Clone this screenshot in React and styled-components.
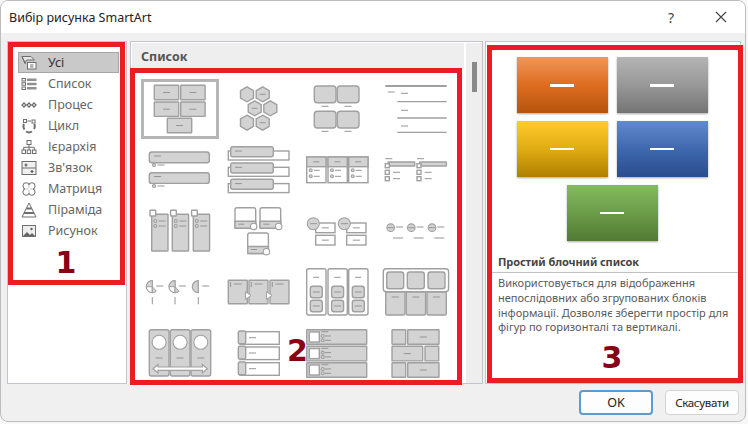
import styled, { createGlobalStyle } from "styled-components";

const GlobalStyle = createGlobalStyle`
  html, body { margin: 0; padding: 0; background: #f7f7f7; }
  body { font-family: "Noto Sans", "Open Sans", sans-serif; width: 748px; height: 424px; overflow: hidden; }
`;

const Dialog = styled.div`
  box-sizing: border-box;
  width: 746px;
  height: 422px;
  display: flex;
  flex-direction: column;
  background: #f0f0f0;
  border: 1px solid #bdbdbd;
  border-radius: 8px;
  overflow: hidden;
`;

const TitleBar = styled.div`
  height: 32px;
  flex: none;
  display: flex;
  align-items: center;
  gap: 2px;
  background: #fff;
  padding-left: 8px;
  font-size: 12.5px;
  color: #222;
`;

const TitleText = styled.span`
  flex: 1;
`;

const TitleButton = styled.span`
  width: 48px;
  display: flex;
  justify-content: center;
  color: #444;
  font-size: 14px;
`;

const Body = styled.div`
  display: flex;
  padding: 8px 0 0 6px;
  height: 343px;
  flex: none;
`;

const Panel = styled.div`
  box-sizing: border-box;
  height: 343px;
  background: #fff;
  border: 1px solid #c4c4cc;
  flex: none;
`;

const LeftPanel = styled(Panel)`
  width: 120px;
  margin-right: 3px;
`;

const MiddlePanel = styled(Panel)`
  width: 353px;
  margin-right: 2px;
  display: flex;
`;

const RightPanel = styled(Panel)`
  width: 256px;
`;

const RedBox = styled.div`
  box-sizing: border-box;
  border: 5px solid #ed1c24;
  background: #fff;
  position: relative;
`;

const LeftRed = styled(RedBox)`
  width: 117px;
  height: 243px;
  padding: 5px 1px 0 5px;
`;

const CategoryList = styled.div`
  display: flex;
  flex-direction: column;
`;

const Category = styled.div`
  box-sizing: border-box;
  height: 21px;
  display: flex;
  align-items: center;
  gap: 11px;
  padding-left: 3px;
  font-size: 12.5px;
  color: ${(p) => (p.$active ? "#333" : "#666")};
  background: ${(p) => (p.$active ? "#c9c9c9" : "transparent")};
  outline: ${(p) => (p.$active ? "1px solid #a6a6a6" : "none")};
  outline-offset: -1px;
`;

const Numeral = styled.div`
  font-family: "DejaVu Sans", sans-serif;
  font-weight: 700;
  font-size: 30px;
  line-height: 32px;
  color: #880015;
  text-align: center;
`;

const ListNumeral = styled(Numeral)`
  margin-top: 6px;
  padding-right: 5px;
`;

const GalleryNumeral = styled(Numeral)`
  position: absolute;
  left: 152px;
  top: 262px;
`;

const DescNumeral = styled(Numeral)`
  margin-top: 7px;
  padding-right: 6px;
`;

const GalleryColumn = styled.div`
  width: 334px;
  margin-left: -1px;
  flex: none;
  padding-top: 1px;
`;

const GalleryHeader = styled.div`
  box-sizing: border-box;
  height: 25px;
  margin-left: 2px;
  display: flex;
  align-items: center;
  padding: 2px 0 0 9px;
  background: #eeeeee;
  font-size: 12.5px;
  font-weight: 700;
  color: #555;
`;

const GalleryRed = styled(RedBox)`
  width: 332px;
  height: 317px;
  overflow: hidden;
  padding: 6px 0 0 6px;
`;

const Gallery = styled.div`
  display: grid;
  grid-template-columns: repeat(4, 78px);
  grid-auto-rows: 60px;
  gap: 1px;
`;

const Thumb = styled.div`
  box-sizing: border-box;
  width: 78px;
  height: 60px;
  outline: ${(p) => (p.$selected ? "3px solid #b5b5b5" : "none")};
  outline-offset: -3px;
  svg { display: block; }
`;

const ScrollTrack = styled.div`
  width: 16px;
  margin-left: 2px;
  margin-top: 1px;
  background: #eeeeee;
  padding-top: 19px;
  display: flex;
  justify-content: center;
`;

const ScrollThumb = styled.div`
  width: 5px;
  height: 30px;
  background: #8a8a8a;
`;

const RightRed = styled(RedBox)`
  width: 256px;
  height: 338px;
  margin: 3px -2px 0 1px;
`;

const Swatches = styled.div`
  display: flex;
  flex-wrap: wrap;
  justify-content: center;
  gap: 8px 9px;
  width: 192px;
  margin: 7px 0 0 24px;
`;

const Swatch = styled.div`
  width: 91px;
  height: 56px;
  display: flex;
  align-items: center;
  justify-content: center;
  background: linear-gradient(${(p) => p.$top}, ${(p) => p.$mid} 50%, ${(p) => p.$bottom});
  box-shadow: 0 1px 2px rgba(0, 0, 0, 0.35);
  &::after {
    content: "";
    width: 24px;
    height: ${(p) => (p.$thick ? "3px" : "2px")};
    background: #fff;
  }
`;

const DescTitle = styled.div`
  margin-top: 9px;
  height: 22px;
  display: flex;
  align-items: center;
  padding-left: 6px;
  font-size: 11px;
  letter-spacing: -0.1px;
  font-weight: 700;
  color: #444;
  border-bottom: 1px solid #c0c0c0;
`;

const DescText = styled.div`
  padding: 3px 0 0 6px;
  font-size: 11px;
  line-height: 14.8px;
  color: #5a5a5a;
  white-space: nowrap;
`;

const Footer = styled.div`
  display: flex;
  justify-content: flex-end;
  gap: 12px;
  padding: 6px 6px 0 0;
`;

const Button = styled.button`
  box-sizing: border-box;
  width: 74px;
  height: 25px;
  padding: 0;
  font-family: inherit;
  font-size: ${(p) => (p.$primary ? "12.5px" : "11.5px")};
  letter-spacing: ${(p) => (p.$primary ? "0" : "-0.3px")};
  color: #222;
  background: #fdfdfd;
  border: ${(p) => (p.$primary ? "2px solid #5c9bd1" : "1px solid #d2d2d2")};
  border-radius: 4px;
`;

/* category icons */
const Ico = ({ children }) => (
  <svg width="16" height="16" viewBox="0 0 16 16" fill="none" stroke="#6e6e6e" strokeWidth="1">
    {children}
  </svg>
);

const icons = [
  <Ico>
    <path d="M1 1.5h9l3.5 3.5h-8l-1.5 3.5z" fill="#e6e6e6" />
    <path d="M1 1.5l3.5 7" />
    <rect x="6.5" y="7.5" width="8.5" height="6.5" fill="#fff" />
    <path d="M9 10h3.5M9 12h3.5" />
  </Ico>,
  <Ico>
    <rect x="1" y="2.5" width="3.5" height="2.5" />
    <rect x="1" y="6.7" width="3.5" height="2.5" />
    <rect x="1" y="11" width="3.5" height="2.5" />
    <path d="M6 3.8h9.5M6 8h9.5M6 12.2h9.5" strokeWidth="2.6" stroke="#8f8f8f" />
  </Ico>,
  <Ico>
    <path d="M3 6l2 2-2 2-2-2zM8 6l2 2-2 2-2-2zM13 6l2 2-2 2-2-2z" strokeWidth="1.3" />
  </Ico>,
  <Ico>
    <path d="M3 6a5.5 5.5 0 0 0 .5 5.5M5 13.5a5.5 5.5 0 0 0 6 0M13 11a5.5 5.5 0 0 0 .3-5" strokeWidth="2" />
    <rect x="2.5" y="1.5" width="3" height="3" fill="#fff" />
    <rect x="11" y="2" width="3" height="3" fill="#fff" />
    <path d="M6.5 3h3.5" />
  </Ico>,
  <Ico>
    <rect x="6" y="1.5" width="4" height="4" />
    <rect x="1" y="11" width="3.5" height="3.5" />
    <rect x="6.2" y="11" width="3.5" height="3.5" />
    <rect x="11.5" y="11" width="3.5" height="3.5" />
    <path d="M8 5.5V11M2.7 11V8.3h10.6V11" />
  </Ico>,
  <Ico>
    <rect x="1" y="1.5" width="14" height="13" fill="#f0f0f0" />
    <path d="M1 8h14" />
    <path d="M3.5 5h3M5 3.5v3M9.5 11.5h3" strokeWidth="1.2" stroke="#555" />
    <path d="M11 10v3" stroke="#555" strokeWidth="1.2" />
  </Ico>,
  <Ico>
    <circle cx="5.2" cy="5" r="3.3" />
    <circle cx="10.8" cy="5" r="3.3" />
    <circle cx="5.2" cy="11" r="3.3" />
    <circle cx="10.8" cy="11" r="3.3" />
    <path d="M8 4v8M4 8h8" stroke="#fff" strokeWidth="1.5" />
  </Ico>,
  <Ico>
    <path d="M8 1l7 14H1z" />
    <path d="M5.3 6.5h5.4M3 11h10" strokeWidth="2" />
  </Ico>,
  <Ico>
    <rect x="1.5" y="2.5" width="13" height="11" fill="#eee" />
    <path d="M2 13l4-4 3 3 2-2 3 3z" fill="#666" stroke="none" />
    <circle cx="10.5" cy="6" r="1.2" fill="#666" stroke="none" />
  </Ico>,
];

const categories = ["Усі", "Список", "Процес", "Цикл", "Ієрархія", "Зв'язок", "Матриця", "Піраміда", "Рисунок"];

/* gallery drawing helpers */
const G = "#d3d3d3";
const S = "#a0a0a0";
const L = "#959595";

const D = ({ x, y, w = 7 }) => <path d={`M${x} ${y}h${w}`} stroke={L} strokeWidth="1" fill="none" />;
const R = ({ x, y, w, h, r = 1, f = G, sw = 1.4 }) => (
  <rect x={x} y={y} width={w} height={h} rx={r} fill={f} stroke={S} strokeWidth={sw} />
);
const B = (props) => (
  <>
    <R {...props} />
    <D x={props.x + props.w / 2 - 3.5} y={props.y + props.h / 2} />
  </>
);
const C = ({ x, y, r = 1.5, f = G }) => <circle cx={x} cy={y} r={r} fill={f} stroke={S} strokeWidth="1.1" />;
const Hex = ({ x, y, dash }) => (
  <>
    <path
      d={`M${x} ${y - 7.5}l6.5 3.75v7.5l-6.5 3.75l-6.5-3.75v-7.5z`}
      fill={G}
      stroke={S}
      strokeWidth="1.4"
    />
    {dash && <D x={x - 3} y={y} w={6} />}
  </>
);

const groupList = (dx) => (
  <g transform={`translate(${dx} 0)`}>
    <D x={7.3} y={18.7} />
    <R x={10} y={22} w={26.7} h={4} r={0.5} />
    <R x={7.3} y={23.7} w={4} h={4} r={0} f="#fff" />
    <R x={7.3} y={30.3} w={4} h={4} r={0} f="#fff" />
    <R x={7.3} y={36.7} w={4} h={4} r={0} f="#fff" />
    <D x={15} y={32.3} />
    <D x={15} y={38.7} />
  </g>
);

const thumbs = [
  <>
    <B x={13.3} y={6.3} w={24.4} h={14.4} r={0.5} />
    <B x={39.7} y={6.3} w={24.4} h={14.4} r={0.5} />
    <B x={13.3} y={23} w={24.4} h={14.4} r={0.5} />
    <B x={39.7} y={23} w={24.4} h={14.4} r={0.5} />
    <B x={26.3} y={39.3} w={24.4} h={14.4} r={0.5} />
  </>,
  <>
    <Hex x={27} y={15.3} />
    <Hex x={42.7} y={15.3} dash />
    <Hex x={34.7} y={29.3} dash />
    <Hex x={50.3} y={29.3} />
    <Hex x={27} y={43.7} />
    <Hex x={42.7} y={43.7} dash />
  </>,
  <>
    <R x={15.3} y={7} w={21.7} h={16.7} r={3} />
    <R x={38.3} y={7} w={21.7} h={16.7} r={3} />
    <R x={15.3} y={32.3} w={21.7} h={16.7} r={3} />
    <R x={38.3} y={32.3} w={21.7} h={16.7} r={3} />
    <D x={22.5} y={27.3} />
    <D x={45.5} y={27.3} />
    <D x={22.5} y={52.3} />
    <D x={45.5} y={52.3} />
  </>,
  <>
    <path d="M7.3 7h61.4" stroke="#808080" strokeWidth="1.7" />
    <D x={9.7} y={13} />
    <D x={23} y={14.3} />
    <path d="M19.3 22.7h49.4M19.3 39h49.4M19.3 53.3h49.4" stroke="#a0a0a0" strokeWidth="1.3" />
    <D x={23} y={31.3} />
    <D x={23} y={47} />
  </>,
  <>
    <R x={8.3} y={12} w={60} h={10.7} r={2.5} />
    <D x={13} y={16} />
    <C x={13} y={25} />
    <D x={16.5} y={25} />
    <R x={8.3} y={32.7} w={60} h={10.7} r={2.5} />
    <D x={13} y={36.5} />
    <C x={13} y={46} />
    <D x={16.5} y={46} />
  </>,
  <>
    {[0, 16.3, 32.6].map((o) => (
      <g key={o} transform={`translate(0 ${o})`}>
        <R x={8.3} y={11} w={60.7} h={9} r={0} f="#fff" />
        <R x={10.7} y={6.7} w={42.6} h={10} r={2} />
        <D x={15} y={11} />
      </g>
    ))}
  </>,
  <>
    {[7.7, 29, 49.7].map((x) => (
      <g key={x}>
        <R x={x} y={17} w={19.3} h={25.7} r={0} f="#fff" />
        <R x={x} y={17} w={19.3} h={9.7} r={0} />
        <D x={x + 6.5} y={21.8} w={6} />
        <C x={x + 4} y={30.3} />
        <C x={x + 4} y={36.3} />
        <D x={x + 7} y={30.3} w={6} />
        <D x={x + 7} y={36.3} w={6} />
      </g>
    ))}
  </>,
  <>
    {groupList(0)}
    {groupList(31.7)}
  </>,
  <>
    {[10.7, 31.3, 52.3].map((x) => (
      <g key={x}>
        <R x={x} y={13.3} w={16.3} h={36.7} r={0.5} />
        <R x={x - 1.7} y={9.3} w={5.7} h={5.7} r={0.5} f="#fff" />
        <C x={x + 3.5} y={20} />
        <C x={x + 3.5} y={25} />
        <D x={x + 7} y={20} />
        <D x={x + 7} y={25} />
      </g>
    ))}
  </>,
  <>
    {[
      [15, 6.7],
      [40, 6.7],
      [27.7, 32],
    ].map(([x, y]) => (
      <g key={x}>
        <R x={x} y={y} w={20.7} h={20.5} r={2} f="#fff" />
        <path d={`M${x} ${y + 13.5}h20.7v7h-20.7z`} fill={G} stroke={S} strokeWidth="1.4" />
        <D x={x + 3.3} y={y + 16.5} w={6} />
        <C x={x + 18.7} y={y + 18.7} r={3.2} f="#fff" />
      </g>
    ))}
  </>,
  <>
    {[0, 31].map((o) => (
      <g key={o} transform={`translate(${o} 0)`}>
        <B x={16.7} y={22} w={19.3} h={9.7} r={0} f="#fff" />
        <B x={16.7} y={34.3} w={19.3} h={9.7} r={0} f="#fff" />
        <C x={14.3} y={22.7} r={6} />
        <D x={11} y={22.7} />
      </g>
    ))}
  </>,
  <>
    {[12.7, 33.3, 54].map((x) => (
      <g key={x}>
        <C x={x} y={26.7} r={3.8} />
        <path d={`M${x - 3} 26.7h6`} stroke={L} strokeWidth="1" />
        <D x={x + 5.3} y={26} />
        <D x={x + 2.3} y={37} w={10} />
      </g>
    ))}
  </>,
  <>
    {[11.3, 34, 57.3].map((x, i) => (
      <g key={x}>
        <path d={`M${x} 18.7a6 6 0 0 0 0 12z`} fill={i === 2 ? G : "#fff"} stroke={S} strokeWidth="1.2" />
        {i < 2 && <path d={`M${x} 24.7v-6a6 6 0 0 0-6 6z`} fill={G} stroke={S} strokeWidth="1" />}
        {i < 2 && <path d={`M${x} 24.7v6a6 6 0 0 0 4-1.5z`} fill={G} stroke={S} strokeWidth="1" />}
        <D x={x + 4} y={24} />
        <path d={`M${x} 35v7.3`} stroke={L} strokeWidth="1" />
      </g>
    ))}
  </>,
  <>
    {[8.3, 29, 50].map((x) => (
      <g key={x}>
        <R x={x} y={18.3} w={19} h={23.4} r={0.5} />
        <path d={`M${x + 2.3} 20v5`} stroke={L} strokeWidth="1" />
        <D x={x + 5.5} y={22} w={8} />
      </g>
    ))}
    <path d="M25.5 29.7l5.5 3.8-5.5 3.8zM46.5 29.7l5.5 3.8-5.5 3.8z" fill="#fff" stroke={S} strokeWidth="1" />
  </>,
  <>
    {[7.7, 29, 49.7].map((x) => (
      <g key={x}>
        <R x={x} y={6.7} w={19.3} h={46.3} r={2} f="#fff" />
        <D x={x + 6.5} y={15.3} w={6} />
        <B x={x + 3.6} y={24.3} w={12} h={11.4} r={2.5} />
        <B x={x + 3.6} y={38.3} w={12} h={11.4} r={2.5} />
      </g>
    ))}
  </>,
  <>
    {[7.7, 28.3, 49].map((x) => (
      <g key={x}>
        <R x={x} y={29.7} w={19.3} h={23.3} r={1.5} />
        <D x={x + 6} y={35} />
      </g>
    ))}
    <R x={5.3} y={6.7} w={65.3} h={23} r={3} f="#fff" />
    {[8.7, 29.3, 50].map((x) => (
      <R key={x} x={x} y={10} w={17} h={16.7} r={2.5} />
    ))}
  </>,
  <>
    {[8.3, 29.3, 50].map((x) => (
      <g key={x}>
        <R x={x} y={6.7} w={19.7} h={46.3} r={2} />
        <C x={x + 9.8} y={19.3} r={7} f="#fff" />
        <D x={x + 6.3} y={35} />
      </g>
    ))}
    <path
      d="M12 45.7l5-4.2v2.5h44.3v-2.5l5 4.2-5 4.2v-2.5h-44.3v2.5z"
      fill="#fff"
      stroke={S}
      strokeWidth="1.2"
    />
  </>,
  <>
    {[8.7, 24, 39.7].map((y) => (
      <g key={y}>
        <R x={20} y={y} w={39.3} h={12.6} r={0} f="#fff" />
        <R x={18.3} y={y - 0.7} w={7.4} h={12.7} r={1.5} />
        <D x={29} y={y + 6} />
      </g>
    ))}
  </>,
  <>
    {[6.7, 23.3, 39.7].map((y) => (
      <g key={y}>
        <R x={7.7} y={y} w={60} h={14.6} r={0.5} />
        <R x={10.3} y={y + 2.3} w={10} h={10} r={0} f="#fff" />
        <D x={22.3} y={y + 2} />
        <C x={23.7} y={y + 6.3} />
        <C x={23.7} y={y + 10.6} />
        <D x={26} y={y + 6.3} w={6} />
        <D x={26} y={y + 10.6} w={6} />
      </g>
    ))}
  </>,
  <>
    <R x={14} y={6.7} w={13.7} h={14.6} r={0.5} />
    <B x={29.7} y={6.7} w={31.3} h={14.6} r={0.5} />
    <B x={14} y={23.3} w={30.7} h={14.6} r={0.5} />
    <R x={47} y={23.3} w={13.7} h={14.6} r={0.5} />
    <R x={14} y={39.7} w={13.7} h={14.6} r={0.5} />
    <B x={29.7} y={39.7} w={31.3} h={14.6} r={0.5} />
  </>,
];

const swatches = [
  { top: "#f0975a", mid: "#dd6d1f", bottom: "#b5540f", thick: true },
  { top: "#b4b4b4", mid: "#989898", bottom: "#747474", thick: true },
  { top: "#ffcb2c", mid: "#e0ac14", bottom: "#b07f00" },
  { top: "#618ace", mid: "#3f68ae", bottom: "#2a4d8d" },
  { top: "#85bb5f", mid: "#6b9c48", bottom: "#527a35" },
];

export default function App() {
  return (
    <>
      <GlobalStyle />
      <Dialog>
        <TitleBar>
          <TitleText>Вибір рисунка SmartArt</TitleText>
          <TitleButton>?</TitleButton>
          <TitleButton>
            <svg width="12" height="12" viewBox="0 0 12 12" stroke="#444" strokeWidth="1.1">
              <path d="M1 1l10 10M11 1L1 11" />
            </svg>
          </TitleButton>
        </TitleBar>
        <Body>
          <LeftPanel>
            <LeftRed>
              <CategoryList>
                {categories.map((name, i) => (
                  <Category key={name} $active={i === 0}>
                    {icons[i]}
                    {name}
                  </Category>
                ))}
              </CategoryList>
              <ListNumeral>1</ListNumeral>
            </LeftRed>
          </LeftPanel>
          <MiddlePanel>
            <GalleryColumn>
              <GalleryHeader>Список</GalleryHeader>
              <GalleryRed>
                <Gallery>
                  {thumbs.map((t, i) => (
                    <Thumb key={i} $selected={i === 0}>
                      <svg width="78" height="60" viewBox="0 0 78 60">
                        {t}
                      </svg>
                    </Thumb>
                  ))}
                </Gallery>
                <GalleryNumeral>2</GalleryNumeral>
              </GalleryRed>
            </GalleryColumn>
            <ScrollTrack>
              <ScrollThumb />
            </ScrollTrack>
          </MiddlePanel>
          <RightPanel>
            <RightRed>
              <Swatches>
                {swatches.map((s) => (
                  <Swatch key={s.top} $top={s.top} $mid={s.mid} $bottom={s.bottom} $thick={s.thick} />
                ))}
              </Swatches>
              <DescTitle>Простий блочний список</DescTitle>
              <DescText>
                Використовується для відображення
                <br />
                непослідовних або згрупованих блоків
                <br />
                інформації. Дозволяє зберегти простір для
                <br />
                фігур по горизонталі та вертикалі.
              </DescText>
              <DescNumeral>3</DescNumeral>
            </RightRed>
          </RightPanel>
        </Body>
        <Footer>
          <Button $primary>OK</Button>
          <Button>Скасувати</Button>
        </Footer>
      </Dialog>
    </>
  );
}
